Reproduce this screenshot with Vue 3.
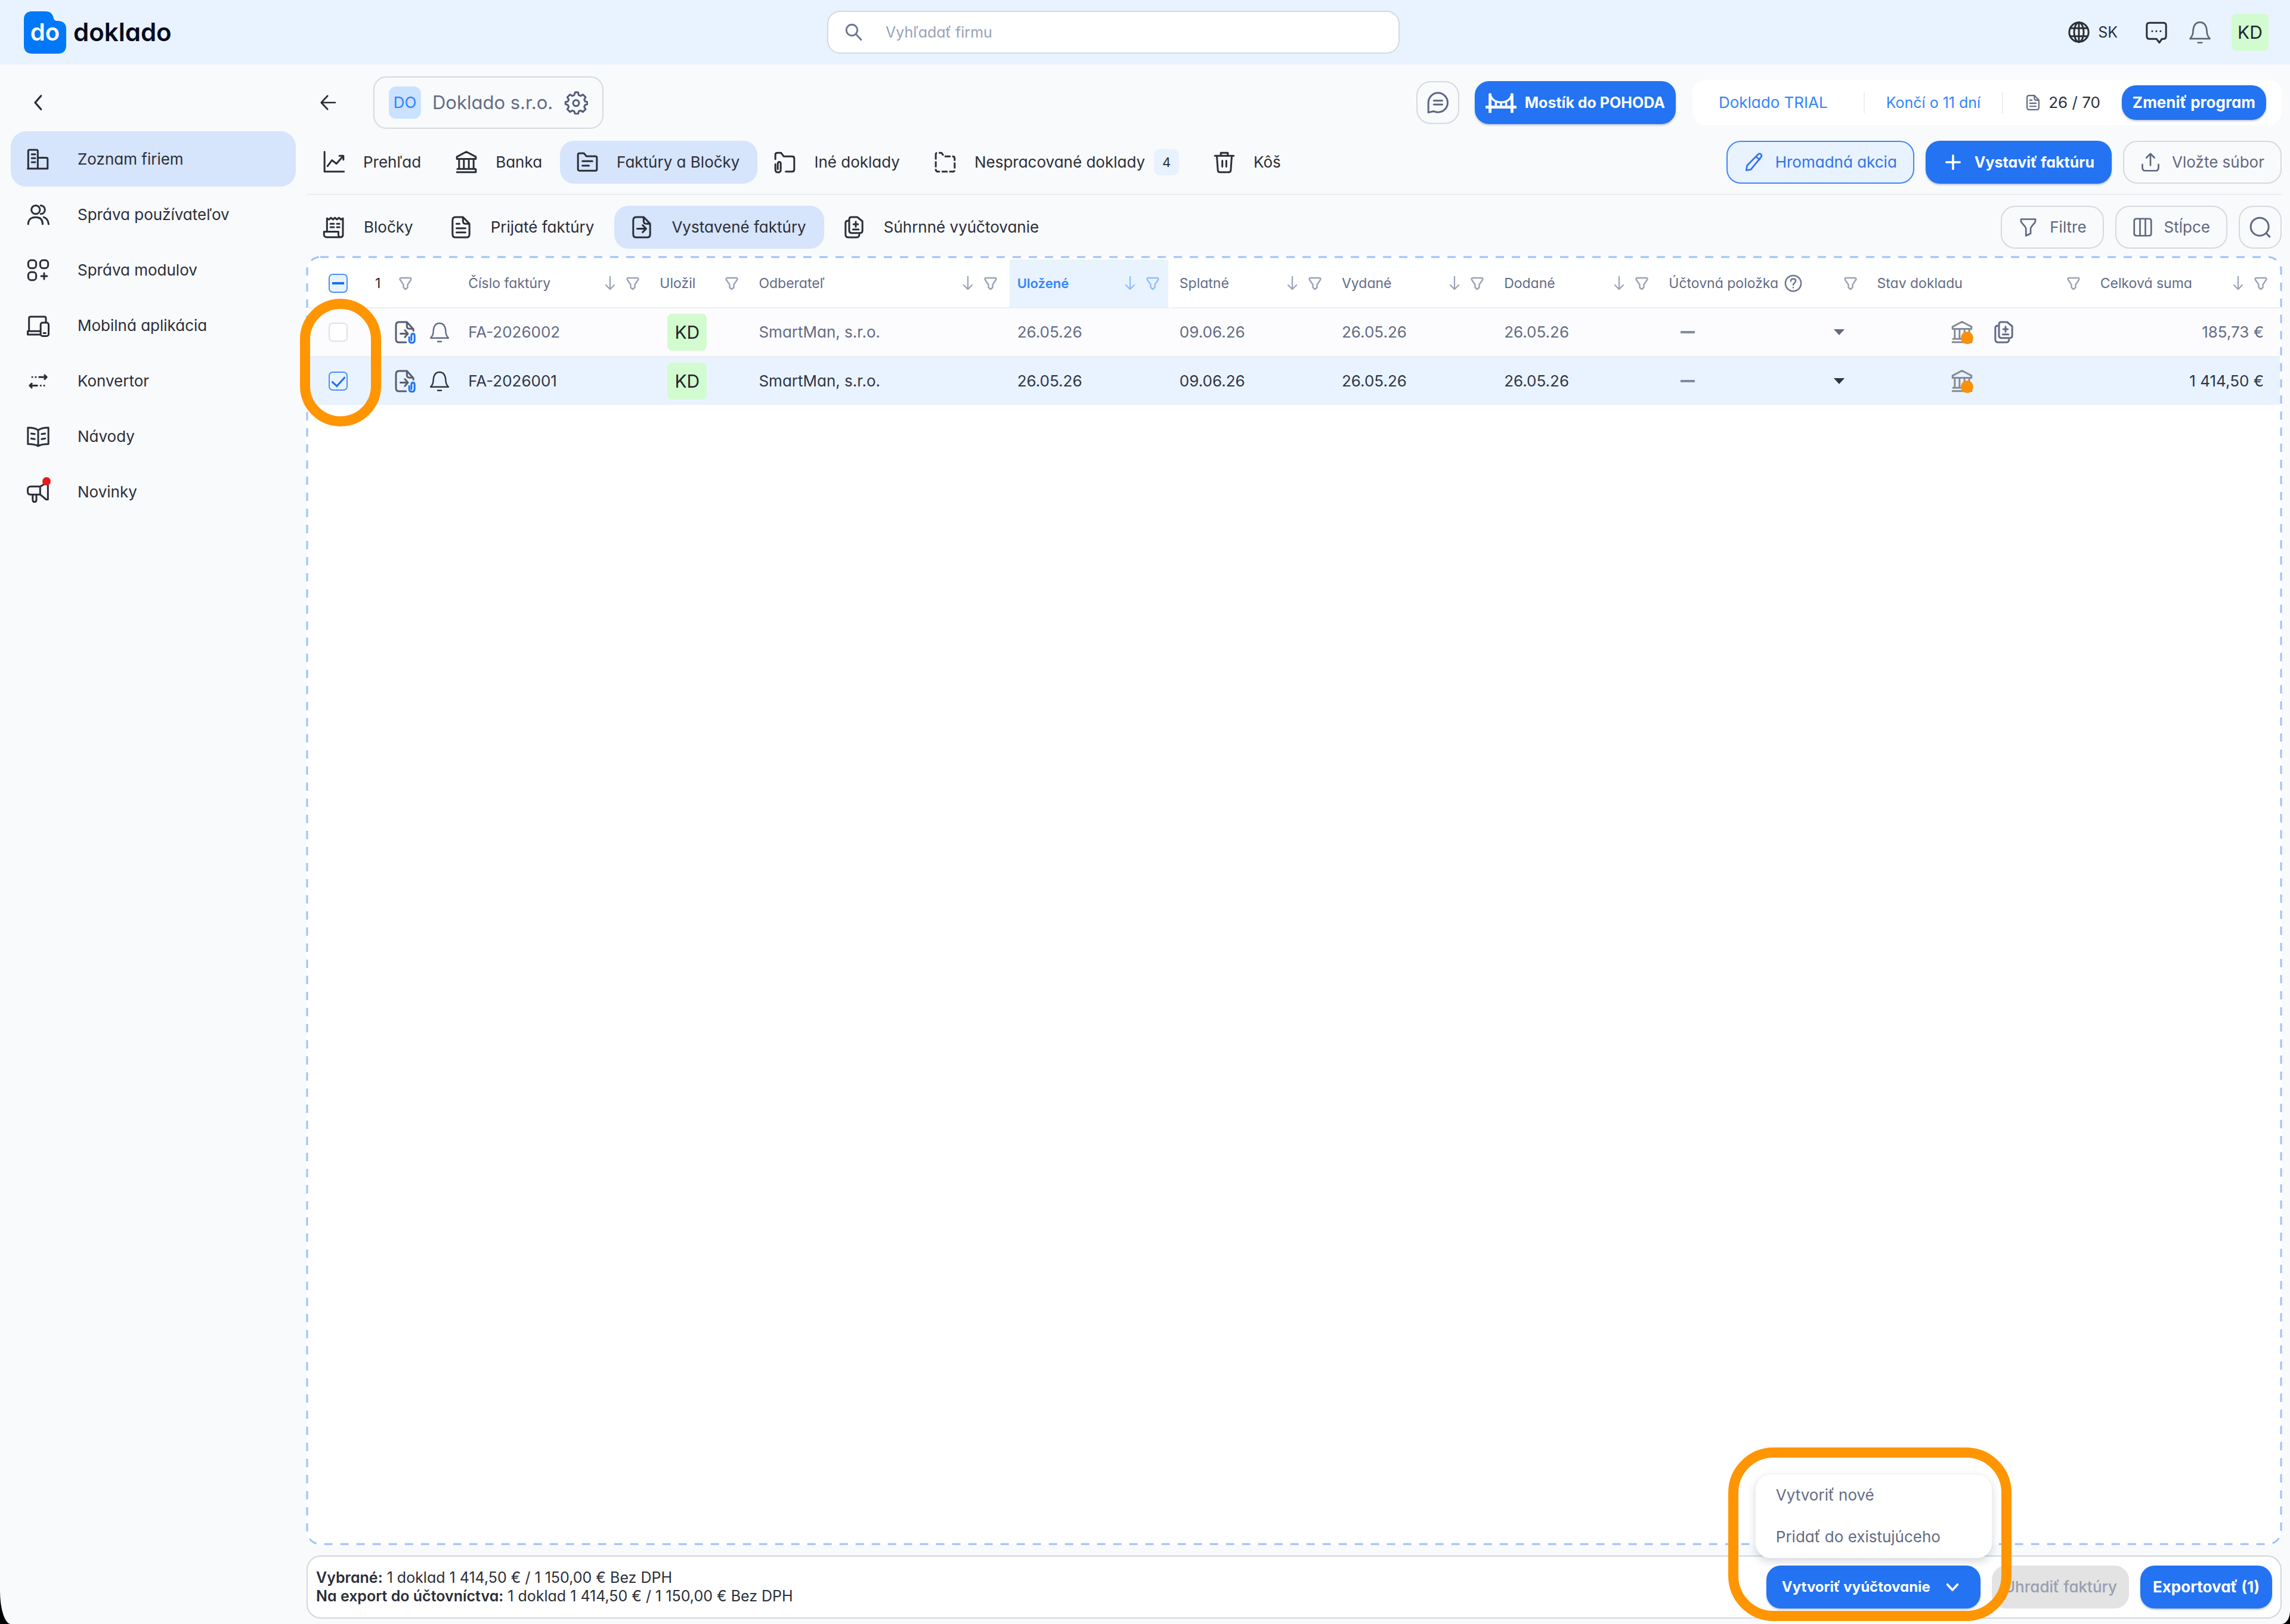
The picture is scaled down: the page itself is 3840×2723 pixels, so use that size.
<script setup>
import { h, ref } from 'vue'

const ICONS = {
  chevronLeft: '<path d="M14.500 4.500 8 12l6.500 7.500" stroke-width="2.200"/>',
  chevronDown: '<path d="m6 9 6 6.500L18 9" stroke-width="2.600"/>',
  back: '<path d="M20 12H5M11.500 4.500 4.500 12l7 7.500"/>',
  building: '<path d="M2 21.500V3.800c0-.8.500-1.300 1.300-1.300h7c.8 0 1.300.5 1.300 1.300v17.700M11.600 10.500h8.600c.8 0 1.300.5 1.300 1.300v9.700H1.500M5.500 7h3.500M5.500 11h3.500M5.500 15h3.500"/>',
  users: '<circle cx="9.500" cy="7" r="4.300"/><path d="M2 21.500c0-4.500 2.800-7 7.500-7s7 2.500 7 7M14.500 2.700a4.300 4.300 0 0 1 0 8.600M17.500 14.500c3 .8 4.500 3 5 7"/>',
  modules: '<rect x="2" y="2" width="8" height="8" rx="3"/><rect x="14" y="2" width="8" height="8" rx="3"/><rect x="2" y="14" width="8" height="8" rx="3"/><path d="M18 15v6M15 18h6"/>',
  devices: '<path d="M2.800 17.500V4.500C2.800 3.500 3.300 3 4.300 3h14c1 0 1.500.5 1.500 1.500V8M14 21H1.500v-3.500H14"/><rect x="14.500" y="9" width="8" height="13.500" rx="2"/><path d="M17.500 19.500h2"/>',
  convert: '<path d="M13 8h7.500M18.500 6l2 2-2 2M11 16.500H3.500M5.500 14.500l-2 2 2 2M6 8h.1M9.500 8h.1M14.500 16.500h.1M18 16.500h.1"/>',
  book: '<path d="M12 5.500C9 3.500 5.500 3 1.700 3v16.500c4 0 7.300.3 10.300 2 3-1.700 6.300-2 10.300-2V3C18.500 3 15 3.500 12 5.500zM12 5.500v16M5 9l3.500.5M5 14l3.500.5M19 9l-3.500.5M19 14l-3.500.5"/>',
  megaphone: '<path d="M14 6.500H4.500c-2 0-3 1-3 2.700v2.600c0 1.700 1 2.700 3 2.700H14l6 5h1.800V3H20zM14 6.500v8M6.500 14.500v5.500c0 1.300.7 2 1.800 2s1.900-.7 1.900-2v-5.500"/>',
  chart: '<path d="M2.500 1.500V21.500H22M5.500 16l4.500-6 4.500 3.500L21 6M17.500 5.500H21.500V9.500"/>',
  bank: '<path d="M2.500 6.500 12 1.500l9.500 5v2.200h-19zM4.700 9.500v9M9.500 9.500v9M14.500 9.500v9M19.300 9.500v9M3 18.800h18M2.500 22h19v-3"/>',
  folderText: '<path d="M2.500 19V4.500C2.500 3.500 3 3 4 3h4.500L11 6h9c1 0 1.500.5 1.500 1.500V19c0 1-.5 1.500-1.500 1.500H4c-1 0-1.500-.5-1.500-1.500zM7 11h10M7 15.500h6.500"/>',
  folderClip: '<path d="M2.500 9V4.500C2.500 3 3.200 2.500 4.500 2.500h3.700l2.800 3.700h8.500c1.300 0 2 .7 2 2v11c0 1.500-.7 2.300-2 2.300H13M2.500 14v5.500c0 1.700 1 2.700 2.700 2.700s2.700-1 2.700-2.700v-6c0-1.200-.6-1.800-1.500-1.800s-1.500.6-1.500 1.800V19"/>',
  folderDash: '<path stroke-linecap="butt" stroke-dasharray="6 1.700" d="M2.500 8V4.500C2.500 3 3.200 2.500 4.500 2.500h3.700l2.800 3.700h8.500c1.300 0 2 .7 2 2v11c0 1.500-.7 2.300-2 2.300h-15c-1.300 0-2-.8-2-2.500z"/>',
  trash: '<path d="M2.500 5.500h19M8.500 5V2.500h7V5M4.500 6l1 14c.1 1.300.8 2 2 2h9c1.200 0 1.900-.7 2-2l1-14M10 10.500v6M14 10.500v6"/>',
  receipt: '<path d="M5 16.500V3l2 1.200L9 2.500l2 1.700 2-1.700 2 1.700 2-1.700 2 1.700L21 3v16.500c0 1.500-.8 2.500-2.200 2.500H4.500c-1.500 0-2.500-1-2.500-2.500v-3h14.500v3c0 1.500.8 2.500 2.300 2.500M8.500 8.500h3.500M8.500 12h3.500M15 8.500h2.500M15 12h2.500"/>',
  fileText: '<path d="M14 1.800H6.500C4.500 1.800 3.500 2.800 3.500 5v14c0 2.200 1 3.200 3 3.200h11c2 0 3-1 3-3.200V8.500zM14 1.800V6c0 1.700.8 2.500 2.500 2.500h4M7.500 8.500h3M7.500 13h9M7.500 17.300h9"/>',
  fileArrow: '<path d="M14 1.800H6.500C4.500 1.800 3.500 2.800 3.500 5v14c0 2.200 1 3.200 3 3.200h11c2 0 3-1 3-3.200V8.500zM14 1.800V6c0 1.700.8 2.500 2.500 2.500h4M7.500 13.500h8.500M13 10l3.500 3.500L13 17"/>',
  fileAttach: '<path d="M14 1.800H6C4 1.800 3 2.800 3 5v14c0 2.200 1 3.200 3 3.200h7M14 1.800 20.500 9v1.500M14 1.800V6c0 1.700.8 2.500 2.500 2.500h3.500M7.500 13.500h7M12 10l3 3.500L12 17"/><path stroke="#1d74f5" d="M16.300 17v3c0 1.700.9 2.700 2.700 2.700s2.700-1 2.700-2.700v-4.500c0-1.200-.6-2-1.600-2s-1.600.8-1.600 2V20"/>',
  copies: '<path d="M9.500 1.800h5.800L20.500 6v9.500c0 1.500-.8 2.300-2.200 2.300H9.500c-1.500 0-2.300-.8-2.300-2.300V4c0-1.400.8-2.200 2.300-2.200zM7 5.500H5.800c-1.400 0-2.300.8-2.300 2.300V19c0 2.200 1 3.200 3 3.200h8c1.700 0 2.700-1 2.900-2.700M13.800 6.500v5M11.500 9h4.600M11 14.200h5.700"/>',
  search: '<circle cx="9.500" cy="9.500" r="6.500" stroke-width="2"/><path d="m14.500 14.500 6 6.500" stroke-width="2"/>',
  find: '<circle cx="11.500" cy="11.500" r="9"/><path d="m18 18 3.500 3.500"/>',
  globe: '<circle cx="12" cy="12" r="9.700"/><ellipse cx="12" cy="12" rx="4.800" ry="9.700"/><path d="M12 2v20M3.300 8h17.400M3.300 16h17.400"/>',
  chatDots: '<path d="M5 2.500h14c1.700 0 2.700 1 2.700 2.700V16c0 1.700-1 2.700-2.700 2.700h-1.500L15 22.500l-3-3.800H5c-1.700 0-2.700-1-2.700-2.700V5.200c0-1.700 1-2.700 2.700-2.700zM7.700 11h.1M11.900 11h.1M16.100 11h.1"/>',
  bell: '<path d="M2 18.500h20c-2-2-2.800-3.300-3-6.500-.2-6-2-10-7-10s-6.800 4-7 10c-.2 3.200-1 4.500-3 6.500zM10 22.500h4" stroke-width="1.600"/>',
  chat: '<path d="M2.500 22v-10a9.700 9.700 0 1 1 9.700 9.700c-1.700 0-3.200-.3-4.400-1zM8 10h8.500M8 14h8.500"/>',
  bridge: '<path stroke-width="2.200" stroke-linecap="butt" d="M0 15.500h24M3.500 5v15M20.500 5v15"/><path stroke-width="1.600" d="M3.500 5.500c1.200 4.500 4.500 6.300 8.500 6.300s7.300-1.800 8.500-6.300M8 11.500v3.500M12 12v3M16 11.500v3.500"/>',
  pencil: '<path d="m3.500 21 1-5.500L16.800 3.200c1-.9 2.200-.9 3.100 0s.9 2.200 0 3.200L8.500 20.300zM14.500 6l4 3"/>',
  plus: '<path d="M12 4.500v15M4.500 12h15" stroke-width="2.400"/>',
  upload: '<path d="M12 15.500V3M7.500 7 12 2.500 16.500 7M3 14.500V18c0 2.300 1 3.500 3.300 3.500h11.400c2.300 0 3.300-1.200 3.300-3.500v-3.500"/>',
  funnel: '<path d="M4 3h16v2.500c0 1.500-5.300 6-5.300 8V19l-5.200 2.500v-8c0-2-5.500-6.500-5.500-8z"/>',
  columns: '<path d="M5 2.500h14c1.700 0 2.500.8 2.500 2.500v14c0 1.700-.8 2.500-2.500 2.500H5c-1.700 0-2.500-.8-2.500-2.500V5c0-1.700.8-2.500 2.500-2.500zM9 2.500v19M15 2.500v19"/>',
  filter: '<path d="M4.500 3h15c2 0 2.500 1.700 1.500 3.300l-5.500 8V19L12 22l-3.500-3v-4.700L3 6.300C2 4.700 2.500 3 4.500 3z" stroke-width="2.400"/>',
  sort: '<path d="M12 1v21M5 15l7 7 7-7" stroke-width="2.200"/>',
  help: '<circle cx="12" cy="12" r="10.500" stroke-width="2"/><path stroke-width="2" d="M8.700 9.200c0-2 1.300-3.200 3.300-3.200s3.300 1.200 3.300 3c0 2.500-3.300 2.600-3.300 5.200M12 17.500v.3"/>',
  caret: '<path d="M1 6h22L12 18z" fill="currentColor" stroke="none"/>',
  gear: '<path d="M12 1.500l2 .3.700 2.700 1.800.8 2.400-1.400 2.700 2.700-1.400 2.400.8 1.800 2.500.7v2l-2.500 1-.8 1.800 1.400 2.400-2.700 2.700-2.400-1.400-1.800.8-.7 2.500h-3l-.9-2.500-1.800-.8-2.400 1.400-2.700-2.700 1.400-2.400-.8-1.800-2.500-1v-2l2.500-.7.8-1.800-1.400-2.400 2.700-2.700 2.400 1.400 1.800-.8.900-2.700z"/><circle cx="12" cy="12.500" r="3"/>',
}

const Icon = (props) =>
  h('svg', {
    class: 'icon',
    viewBox: '0 0 24 24',
    fill: 'none',
    stroke: 'currentColor',
    'stroke-width': 1.8,
    'stroke-linecap': 'round',
    'stroke-linejoin': 'round',
    'aria-hidden': 'true',
    innerHTML: ICONS[props.name],
  })
Icon.props = ['name']

const sideItems = [
  { icon: 'building', label: 'Zoznam firiem', active: true },
  { icon: 'users', label: 'Správa používateľov' },
  { icon: 'modules', label: 'Správa modulov' },
  { icon: 'devices', label: 'Mobilná aplikácia' },
  { icon: 'convert', label: 'Konvertor' },
  { icon: 'book', label: 'Návody' },
  { icon: 'megaphone', label: 'Novinky', dot: true },
]

const tabs = [
  { icon: 'chart', label: 'Prehľad' },
  { icon: 'bank', label: 'Banka' },
  { icon: 'folderText', label: 'Faktúry a Bločky', active: true },
  { icon: 'folderClip', label: 'Iné doklady' },
  { icon: 'folderDash', label: 'Nespracované doklady', count: 4 },
  { icon: 'trash', label: 'Kôš' },
]

const subTabs = [
  { icon: 'receipt', label: 'Bločky' },
  { icon: 'fileText', label: 'Prijaté faktúry' },
  { icon: 'fileArrow', label: 'Vystavené faktúry', active: true },
  { icon: 'copies', label: 'Súhrnné vyúčtovanie' },
]

const columns = [
  { label: 'Číslo faktúry', width: 321, sort: true },
  { label: 'Uložil', width: 166 },
  { label: 'Odberateľ', width: 433, sort: true },
  { label: 'Uložené', width: 272, sort: true, active: true },
  { label: 'Splatné', width: 272, sort: true },
  { label: 'Vydané', width: 272, sort: true },
  { label: 'Dodané', width: 276, sort: true },
  { label: 'Účtovná položka', width: 349, help: true },
  { label: 'Stav dokladu', width: 374 },
  { label: 'Celková suma', width: 314, sort: true },
]

const rows = ref([
  { no: 'FA-2026002', who: 'KD', buyer: 'SmartMan, s.r.o.', saved: '26.05.26', due: '09.06.26', issued: '26.05.26', delivered: '26.05.26', total: '185,73 €', copies: true, selected: false },
  { no: 'FA-2026001', who: 'KD', buyer: 'SmartMan, s.r.o.', saved: '26.05.26', due: '09.06.26', issued: '26.05.26', delivered: '26.05.26', total: '1 414,50 €', copies: false, selected: true },
])
</script>

<template>
  <div class="app">
    <header class="topbar">
      <a class="brand" href="#">
        <span class="mark">
          <svg viewBox="0 0 71 71" aria-hidden="true">
            <path fill="#0078f8" d="M14 0h22c8 0 12 4 13.500 10 1 4 2.500 6 7 6C66 16 71 21 71 29v28c0 9-5 14-14 14H14C5 71 0 66 0 57V14C0 5 5 0 14 0z" />
          </svg>
          <span class="mark-text">do</span>
        </span>
        <span class="brand-name">doklado</span>
      </a>
      <label class="search">
        <Icon name="search" />
        <input type="text" placeholder="Vyhľadať firmu" aria-label="Vyhľadať firmu" />
      </label>
      <div class="top-actions">
        <button class="plain lang" type="button"><Icon name="globe" />SK</button>
        <button class="plain" type="button" aria-label="Správy"><Icon name="chatDots" /></button>
        <button class="plain muted" type="button" aria-label="Upozornenia"><Icon name="bell" /></button>
        <button class="avatar" type="button">KD</button>
      </div>
    </header>

    <div class="body">
      <aside class="sidebar">
        <button class="plain collapse" type="button" aria-label="Zbaliť menu"><Icon name="chevronLeft" /></button>
        <nav>
          <a v-for="item in sideItems" :key="item.label" href="#" class="side-item" :class="{ active: item.active }">
            <span class="side-icon"><Icon :name="item.icon" /><i v-if="item.dot" class="dot"></i></span>
            {{ item.label }}
          </a>
        </nav>
      </aside>

      <main class="main">
        <div class="bar company-bar">
          <button class="plain back" type="button" aria-label="Späť"><Icon name="back" /></button>
          <button class="company" type="button">
            <span class="company-badge">DO</span>
            <span>Doklado s.r.o.</span>
            <Icon name="gear" />
          </button>
          <div class="spacer"></div>
          <button class="btn outline square" type="button" aria-label="Chat"><Icon name="chat" /></button>
          <button class="btn primary bridge" type="button"><Icon name="bridge" />Mostík do POHODA</button>
          <div class="plan">
            <a href="#" class="plan-cell name">Doklado TRIAL</a>
            <a href="#" class="plan-cell">Končí o 11 dní</a>
            <span class="plan-cell usage"><Icon name="fileText" />26 / 70</span>
            <button class="btn primary small" type="button">Zmeniť program</button>
          </div>
        </div>

        <div class="bar tabs-bar">
          <nav class="tabs">
            <a v-for="tab in tabs" :key="tab.label" href="#" class="tab" :class="{ active: tab.active }">
              <Icon :name="tab.icon" />{{ tab.label }}
              <span v-if="tab.count" class="count">{{ tab.count }}</span>
            </a>
          </nav>
          <div class="tools">
            <button class="btn tinted" type="button"><Icon name="pencil" />Hromadná akcia</button>
            <button class="btn primary" type="button"><Icon name="plus" />Vystaviť faktúru</button>
            <button class="btn outline" type="button"><Icon name="upload" />Vložte súbor</button>
          </div>
        </div>

        <div class="bar sub-bar">
          <nav class="tabs">
            <a v-for="tab in subTabs" :key="tab.label" href="#" class="tab" :class="{ active: tab.active }">
              <Icon :name="tab.icon" />{{ tab.label }}
            </a>
          </nav>
          <div class="tools">
            <button class="btn outline" type="button"><Icon name="funnel" />Filtre</button>
            <button class="btn outline" type="button"><Icon name="columns" />Stĺpce</button>
            <button class="btn outline square" type="button" aria-label="Hľadať"><Icon name="find" /></button>
          </div>
        </div>

        <section class="panel">
          <svg class="dashes" aria-hidden="true"><rect x="1" y="1" rx="22" /></svg>
          <table>
            <colgroup>
              <col style="width: 255px" />
              <col v-for="col in columns" :key="col.label" :style="{ width: col.width + 'px' }" />
            </colgroup>
            <thead>
              <tr>
                <th>
                  <div class="select-head">
                    <input type="checkbox" :indeterminate="true" aria-label="Vybrať všetko" />
                    <span class="picked">1</span>
                    <Icon name="filter" />
                  </div>
                </th>
                <th v-for="col in columns" :key="col.label" :class="{ sorted: col.active }">
                  <div class="head">
                    <span>{{ col.label }}</span>
                    <Icon v-if="col.help" name="help" class="help" />
                    <span class="spacer"></span>
                    <Icon v-if="col.sort" name="sort" />
                    <Icon name="filter" />
                  </div>
                </th>
              </tr>
            </thead>
            <tbody>
              <tr v-for="row in rows" :key="row.no" :class="{ selected: row.selected }">
                <td>
                  <div class="select-cell">
                    <input v-model="row.selected" type="checkbox" :aria-label="row.no" />
                    <Icon name="fileAttach" class="file" />
                    <Icon name="bell" class="ring" />
                  </div>
                </td>
                <td>{{ row.no }}</td>
                <td><span class="avatar owner">{{ row.who }}</span></td>
                <td>{{ row.buyer }}</td>
                <td>{{ row.saved }}</td>
                <td>{{ row.due }}</td>
                <td>{{ row.issued }}</td>
                <td>{{ row.delivered }}</td>
                <td>
                  <div class="account"><i class="dash"></i><Icon name="caret" /></div>
                </td>
                <td>
                  <div class="state">
                    <span class="bank"><Icon name="bank" /><i class="warn"></i></span>
                    <Icon v-if="row.copies" name="copies" />
                  </div>
                </td>
                <td class="total">{{ row.total }}</td>
              </tr>
            </tbody>
          </table>
          <div class="mark-ring rows-ring"></div>
        </section>

        <footer class="summary">
          <div class="totals">
            <p><b>Vybrané:</b> 1 doklad 1 414,50 € / 1 150,00 € Bez DPH</p>
            <p><b>Na export do účtovníctva:</b> 1 doklad 1 414,50 € / 1 150,00 € Bez DPH</p>
          </div>
          <div class="create">
            <button class="btn primary create-btn" type="button">Vytvoriť vyúčtovanie<Icon name="chevronDown" /></button>
            <div class="menu">
              <button type="button">Vytvoriť nové</button>
              <button type="button">Pridať do existujúceho</button>
            </div>
            <div class="mark-ring menu-ring"></div>
          </div>
          <button class="btn disabled" type="button" disabled>Uhradiť faktúry</button>
          <button class="btn primary export" type="button">Exportovať (1)</button>
        </footer>
      </main>
    </div>
  </div>
</template>

<style>
body {
  margin: 0;
  background: #000;
}
</style>

<style scoped>
.app {
  display: flex;
  flex-direction: column;
  min-height: 100vh;
  background: #f8fafc;
  border-radius: 0 0 14px 18px / 0 0 22px 56px;
  color: #2b2e37;
  font: 400 26px/30px Inter, "Noto Sans", sans-serif;
  font-feature-settings: "cv11";
}
.app * {
  box-sizing: border-box;
}
a {
  color: inherit;
  text-decoration: none;
}
button,
input {
  margin: 0;
  font: inherit;
  font-feature-settings: inherit;
  color: inherit;
}
button {
  padding: 0;
  border: 0;
  background: none;
  white-space: nowrap;
  cursor: pointer;
}
.icon {
  display: block;
  flex: none;
  width: 40px;
  height: 40px;
}
.plain {
  display: flex;
  align-items: center;
}
.spacer {
  flex: 1;
}

/* top bar */
.topbar {
  display: grid;
  grid-template-columns: 1347fr 960fr 1457fr;
  align-items: center;
  height: 108px;
  padding: 0 36px 0 40px;
  background: #e9f3ff;
}
.brand {
  display: flex;
  align-items: center;
  gap: 12px;
}
.mark {
  display: grid;
  width: 71px;
  height: 71px;
}
.mark > * {
  grid-area: 1 / 1;
}
.mark-text {
  place-self: center;
  color: #fff;
  font-size: 40px;
  font-weight: 600;
}
.brand-name {
  color: #060a20;
  font-size: 42px;
  font-weight: 600;
  line-height: 48px;
}
.search {
  display: flex;
  align-items: center;
  gap: 34px;
  height: 72px;
  padding: 0 26px;
  border: 2px solid #d3d8e2;
  border-radius: 22px;
  background: #fff;
  color: #6b7590;
  font-size: 25px;
}
.search .icon {
  width: 34px;
  height: 34px;
}
.search input {
  flex: 1;
  min-width: 0;
  border: 0;
  outline: 0;
  background: none;
}
.search input::placeholder {
  color: #98a1b8;
  opacity: 1;
}
.top-actions {
  display: flex;
  align-items: center;
  justify-content: flex-end;
  gap: 33px;
}
.lang {
  gap: 12px;
  margin-right: 12px;
  font-size: 25px;
}
.muted {
  color: #5b6479;
}
.avatar {
  display: inline-flex;
  align-items: center;
  justify-content: center;
  width: 62px;
  height: 62px;
  border-radius: 8px;
  background: #d2fccf;
  color: #1f2430;
  font-size: 30px;
}

/* layout */
.body {
  flex: 1;
  display: flex;
}
.sidebar {
  flex: none;
  width: 514px;
  padding: 42px 18px 0;
}
.collapse {
  width: 94px;
  height: 44px;
  justify-content: center;
  margin-bottom: 26px;
}
.collapse .icon {
  width: 36px;
  height: 36px;
}
.side-item {
  display: flex;
  align-items: center;
  gap: 46px;
  height: 93px;
  padding: 0 26px;
  border-radius: 26px;
}
.side-item.active,
.tab.active {
  background: #d6e4fc;
}
.side-icon {
  position: relative;
}
.dot {
  position: absolute;
  top: -5px;
  right: -1px;
  width: 14px;
  height: 14px;
  border-radius: 50%;
  background: #e21b1b;
}
.main {
  flex: 1;
  min-width: 0;
  display: flex;
  flex-direction: column;
  padding: 20px 14px 9px 0;
}
.bar {
  display: flex;
  align-items: center;
}

/* company row */
.back {
  margin-left: 18px;
}
.back .icon {
  width: 36px;
  height: 36px;
}
.company {
  display: flex;
  align-items: center;
  gap: 19px;
  height: 88px;
  margin-left: 58px;
  padding: 0 24px;
  border: 2px solid #d6d9df;
  border-radius: 22px;
  color: #636b85;
  font-size: 31px;
}
.company .icon {
  color: #535b78;
}
.company-badge {
  width: 54px;
  border-radius: 12px;
  background: #cbe2ff;
  color: #2d80ff;
  font-size: 26px;
  line-height: 54px;
}
.btn {
  display: flex;
  align-items: center;
  gap: 18px;
  height: 72px;
  padding: 0 27px 0 26px;
  border: 2px solid transparent;
  border-radius: 24px;
}
.primary {
  background: #2373f2;
  color: #fff;
  font-size: 25px;
  font-weight: 700;
  box-shadow: 0 2px 3px rgba(30, 60, 120, 0.3);
}
.outline {
  border-color: #d6d9df;
  color: #5f6780;
}
.tinted {
  border-color: #3f86fb;
  background: #e9f2ff;
  color: #2d74ec;
}
.tools .icon {
  width: 36px;
  height: 36px;
}
.btn.square {
  width: 72px;
  padding: 0;
  justify-content: center;
}
.square .icon {
  width: 40px;
  height: 40px;
}
.tools .square .icon {
  width: 40px;
  height: 40px;
}
.bridge {
  gap: 14px;
  margin-left: 26px;
  padding: 0 16px;
}
.bridge .icon {
  width: 52px;
  height: 52px;
}
.plan {
  display: flex;
  align-items: center;
  height: 76px;
  margin-left: 28px;
  padding-right: 26px;
  border-radius: 22px;
  background: #fff;
}
.plan-cell {
  padding: 3px 36px;
  border-left: 2px solid #eceef2;
  color: #3384fb;
  font-size: 25px;
}
.plan-cell.name {
  padding: 3px 60px 3px 44px;
  border-left: 0;
  font-size: 26px;
}
.plan .usage {
  display: flex;
  align-items: center;
  gap: 12px;
  color: #2c303b;
  font-size: 26px;
}
.usage .icon {
  width: 28px;
  height: 28px;
  color: #5f6780;
}
.small {
  height: 58px;
  padding: 0 16px;
  font-size: 26px;
}

/* tabs */
.tabs-bar {
  justify-content: space-between;
  margin-top: 20px;
  padding-bottom: 17px;
  border-bottom: 2px solid #ebedf0;
}
.sub-bar {
  justify-content: space-between;
  margin: 18px 0 13px;
}
.tabs,
.tools {
  display: flex;
}
.tabs {
  gap: 4px;
}
.tools {
  gap: 19px;
}
.tab {
  display: flex;
  align-items: center;
  gap: 30px;
  height: 72px;
  padding: 0 30px 0 26px;
  border-radius: 24px;
  white-space: nowrap;
}
.tabs-bar .tabs {
  gap: 0;
}
.tabs-bar .tab {
  gap: 29px;
}
.count {
  width: 42px;
  margin: 0 0 0 -14px;
  border-radius: 10px;
  background: #e8f1fe;
  font-size: 22px;
  line-height: 44px;
  text-align: center;
}

/* table */
.panel {
  position: relative;
  flex: 1;
  padding: 5px 3px 4px;
  border-radius: 24px;
  background: #fff;
}
.dashes {
  position: absolute;
  inset: 0;
  width: 100%;
  height: 100%;
  overflow: visible;
  pointer-events: none;
}
.dashes rect {
  width: calc(100% - 2px);
  height: calc(100% - 2px);
  fill: none;
  stroke: #9cc2ff;
  stroke-width: 3;
  stroke-dasharray: 14 13;
}
table {
  position: relative;
  width: 100%;
  table-layout: fixed;
  border-collapse: separate;
  border-spacing: 0;
}
th,
td {
  height: 82px;
  padding: 0 20px 0 13px;
  border-bottom: 2px solid #eceef1;
  text-align: left;
  font-weight: 400;
  white-space: nowrap;
}
th {
  color: #636b85;
  font-size: 23px;
}
th .icon {
  width: 24px;
  height: 24px;
  color: #9aa1b8;
}
th .help {
  width: 30px;
  height: 30px;
  color: #6d7490;
}
th.sorted {
  border-right: 6px solid transparent;
  padding-right: 14px;
  background: #e9f3ff;
  background-clip: padding-box;
  color: #3384fb;
  font-size: 22px;
  font-weight: 600;
}
th.sorted .icon {
  color: #8fbcff;
}
.head {
  display: flex;
  align-items: center;
  gap: 14px;
}
.head .help {
  margin-left: -4px;
}
.select-head {
  display: flex;
  align-items: center;
  padding-left: 21px;
}
.picked {
  margin: 0 30px 0 46px;
  color: #23262f;
}
td {
  background: #fcfcfe;
  color: #636b85;
}
.selected td {
  border-bottom: 0;
  height: 80px;
  background: #e9f3ff;
  color: #2f3546;
}
.select-cell {
  display: flex;
  align-items: center;
  padding-left: 21px;
}
.select-cell .file {
  margin: 0 20px 0 76px;
  color: #555d72;
}
.select-cell .ring {
  width: 36px;
  height: 36px;
}
input[type="checkbox"] {
  flex: none;
  display: grid;
  place-items: center;
  width: 32px;
  height: 32px;
  appearance: none;
  border: 2px solid #dfe1e6;
  border-radius: 7px;
  background: #fff;
}
input[type="checkbox"]:checked,
input[type="checkbox"]:indeterminate {
  border-color: #4b8ffb;
  background: #e9f3ff;
}
input[type="checkbox"]:checked::after {
  content: "";
  width: 10px;
  height: 19px;
  margin-top: -5px;
  border: solid #1d6ff5;
  border-width: 0 3px 3px 0;
  transform: rotate(42deg);
}
input[type="checkbox"]:indeterminate::after {
  content: "";
  width: 20px;
  height: 4px;
  background: #1d6ff5;
}
.owner {
  width: 66px;
  margin-left: 13px;
  vertical-align: middle;
}
.account {
  display: flex;
  align-items: center;
  justify-content: space-between;
  padding: 0 21px 0 20px;
}
.account .icon {
  width: 20px;
  height: 20px;
}
.dash {
  width: 24px;
  height: 4px;
  background: #8489a3;
}
.state {
  display: flex;
  align-items: center;
  gap: 30px;
  padding-left: 122px;
}
.bank {
  position: relative;
  color: #858a94;
}
.warn {
  position: absolute;
  right: 1px;
  bottom: 0;
  width: 21px;
  height: 21px;
  border-radius: 50%;
  background: #fb9108;
}
.total {
  padding-right: 27px;
  text-align: right;
}

/* orange callouts */
.mark-ring {
  position: absolute;
  border: 17px solid #ff9500;
  pointer-events: none;
}
.rows-ring {
  left: -11px;
  top: 71px;
  width: 136px;
  height: 214px;
  border-radius: 68px;
}
.menu-ring {
  inset: -198px -52px -21px -64px;
  border-radius: 76px;
}

/* footer */
.summary {
  display: flex;
  align-items: center;
  gap: 19px;
  height: 106px;
  margin-top: 18px;
  padding: 0 14px;
  border: 2px solid #d3d6dc;
  border-radius: 24px;
  background: #fff;
}
.totals {
  flex: 1;
  font-size: 25px;
}
.totals p {
  margin: 0;
  line-height: 31px;
}
.totals b {
  font-weight: 600;
}
.create {
  position: relative;
}
.create > .btn {
  position: relative;
}
.create-btn {
  gap: 20px;
  padding: 0 28px 0 24px;
  font-size: 24px;
}
.create-btn .icon {
  width: 34px;
  height: 34px;
}
.menu {
  position: absolute;
  left: -19px;
  right: -20px;
  bottom: 84px;
  border: 1px solid #eceef1;
  border-radius: 26px;
  background: #fff;
  box-shadow: 0 6px 14px rgba(40, 50, 80, 0.18);
  color: #636b85;
}
.menu button {
  display: block;
  width: 100%;
  height: 70px;
  padding: 0 34px;
  text-align: left;
}
.disabled {
  background: #e3e3e3;
  color: #9a9db0;
  font-weight: 500;
  padding: 0 18px;
}
.export {
  padding: 0 19px;
  font-size: 26px;
}
</style>
